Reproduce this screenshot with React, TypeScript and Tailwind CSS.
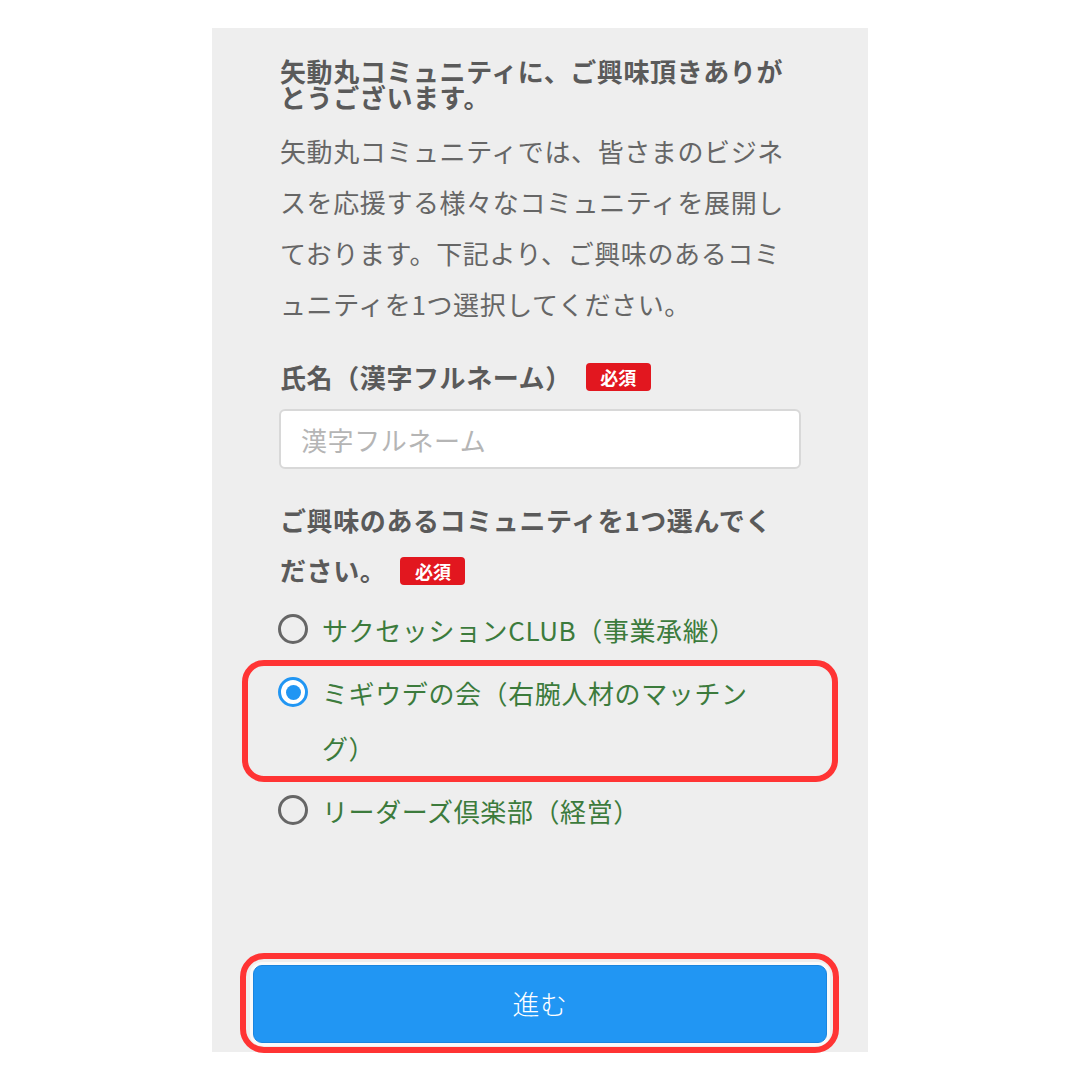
import { useState } from 'react'

const options = [
  { id: 'succession', label: 'サクセッションCLUB（事業承継）' },
  { id: 'migiude', label: 'ミギウデの会（右腕人材のマッチング）' },
  { id: 'leaders', label: 'リーダーズ倶楽部（経営）' },
]

function RequiredBadge() {
  return (
    <span className="inline-flex h-[28px] w-[65px] items-center justify-center rounded-[4px] bg-[#e2171f] text-[18px] font-bold leading-none tracking-normal text-white">
      必須
    </span>
  )
}

function Radio({ checked }: { checked: boolean }) {
  return (
    <span
      className={
        checked
          ? 'mt-[12px] flex h-[30px] w-[30px] shrink-0 items-center justify-center rounded-full border-[3px] border-[#2196f3] bg-white'
          : 'mt-[12px] flex h-[30px] w-[30px] shrink-0 items-center justify-center rounded-full border-[3px] border-[#666666]'
      }
    >
      {checked && <span className="h-[15px] w-[15px] rounded-full bg-[#2196f3]" />}
    </span>
  )
}

export default function App() {
  const [selected, setSelected] = useState('migiude')

  return (
    <div className="flex h-[1080px] w-[1080px] justify-center bg-white pt-[28px] font-['Noto_Sans_CJK_JP',sans-serif] tracking-[0.6px]">
      <div className="flex h-[1024px] w-[656px] flex-col bg-[#eeeeee]">
        {/* ── Intro ── */}
        <div className="px-[68px] pt-[30px]">
          <h1 className="text-[26px] font-bold leading-[26px] text-[#5a5a5a]">
            矢動丸コミュニティに、ご興味頂きありがとうございます。
          </h1>
          <p className="mt-[15px] text-[26px] leading-[51px] text-[#666666]">
            矢動丸コミュニティでは、皆さまのビジネスを応援する様々なコミュニティを展開しております。下記より、ご興味のあるコミュニティを1つ選択してください。
          </p>
        </div>

        {/* ── Name ── */}
        <div className="px-[68px] pt-[28px]">
          <div className="flex h-[40px] items-center">
            <span className="text-[26px] font-bold leading-[40px] text-[#5a5a5a]">氏名（漢字フルネーム）</span>
            <span className="ml-[14px]">
              <RequiredBadge />
            </span>
          </div>
          <input
            type="text"
            placeholder="漢字フルネーム"
            className="mt-[12px] h-[60px] w-[522px] -ml-px rounded-[6px] border-2 border-[#d8d8d8] bg-white px-[20px] text-[26px] text-[#555555] placeholder:text-[#b5b5b5] focus:outline-none"
          />
        </div>

        {/* ── Community ── */}
        <div className="px-[68px] pt-[27px]">
          <p className="max-w-[505px] text-[26px] font-bold leading-[48px] text-[#5a5a5a]">
            ご興味のあるコミュニティを1つ選んでください。
            <span className="ml-[14px] inline-block align-[2px]">
              <RequiredBadge />
            </span>
          </p>

          <div className="mt-[8px] flex flex-col gap-[8px]">
            {options.map((o) => {
              const checked = selected === o.id
              return (
                <label
                  key={o.id}
                  onClick={() => setSelected(o.id)}
                  className="relative -ml-[2px] flex cursor-pointer items-start gap-[14px]"
                >
                  <Radio checked={checked} />
                  <span className="max-w-[445px] text-[26px] leading-[55px] text-[#3c7b3c]">{o.label}</span>
                  {checked && (
                    <span className="pointer-events-none absolute -bottom-[7px] -left-[36px] -right-[38px] -top-[5px] rounded-[22px] border-[6px] border-[#ff3434]" />
                  )}
                </label>
              )
            })}
          </div>
        </div>

        {/* ── Submit ── */}
        <div className="mt-auto px-[41px] pb-[9px]">
          <div className="relative">
            <button
              type="button"
              className="flex h-[78px] w-full items-center justify-center rounded-[9px] border border-[#1a86e0] bg-[#2196f3] text-[27px] font-light text-white shadow-[0_0_0_3px_#fafafa]"
            >
              進む
            </button>
            <span className="pointer-events-none absolute -bottom-[10px] -left-[13px] -right-[12px] -top-[12px] rounded-[24px] border-[6px] border-[#ff3434]" />
          </div>
        </div>
      </div>
    </div>
  )
}
